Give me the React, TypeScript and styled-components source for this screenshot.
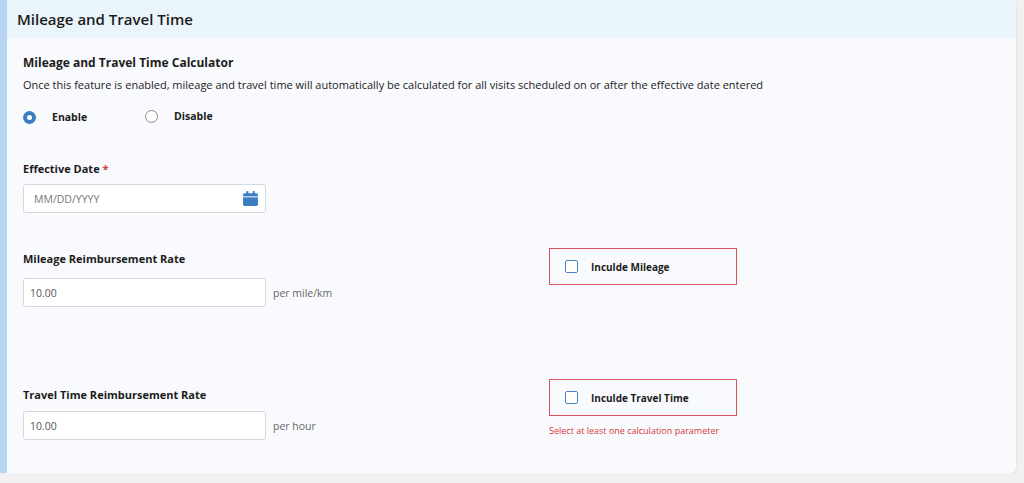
import React from 'react';
import styled, { createGlobalStyle } from 'styled-components';

const Global = createGlobalStyle`
  body { margin: 0; background: #f1f1f2; font-family: "Open Sans", "Noto Sans", sans-serif; }
`;

const Card = styled.div`
  width: 1016px;
  height: 473px;
  box-sizing: border-box;
  border-left: 7px solid #b5d5f2;
  border-radius: 0 0 6px 0;
  background: #f9fafd;
  box-shadow: 0 1px 3px rgba(0,0,0,0.12);
  overflow: hidden;
`;

const Header = styled.div`
  height: 38px;
  background: #eaf4fb;
  display: flex;
  align-items: center;
  padding-left: 10px;
  font-size: 15px;
  font-weight: 600;
  color: #1c1c1c;
`;

const Body = styled.div`
  padding: 16px 0 0 16px;
`;

const Title = styled.div`
  font-size: 12px;
  font-weight: 700;
  color: #1c1c1c;
  line-height: 18px;
`;

const Desc = styled.div`
  font-size: 11px;
  color: #222;
  line-height: 18px;
  margin-top: 4px;
`;

const RadioRow = styled.div`
  display: flex;
  margin-top: 16px;
`;

const RadioItem = styled.label<{ $w: number; $up?: boolean }>`
  display: flex;
  align-items: center;
  gap: 16px;
  width: ${p => p.$w}px;
  margin-top: ${p => (p.$up ? -2 : 0)}px;
  font-size: 10.5px;
  font-weight: 700;
  color: #1c1c1c;
`;

const RadioDot = styled.span<{ $on?: boolean }>`
  width: 13px;
  height: 13px;
  box-sizing: border-box;
  border-radius: 50%;
  border: ${p => (p.$on ? '4px solid #3a7ec1' : '1px solid #8b8b8b')};
  background: #fff;
`;

const Label = styled.div<{ $mb: number }>`
  font-size: 11px;
  font-weight: 700;
  color: #1c1c1c;
  line-height: 16px;
  margin-bottom: ${p => p.$mb}px;
`;

const Req = styled.span`
  color: #d43b3b;
`;

const Input = styled.div<{ $dim?: boolean }>`
  width: 243px;
  height: 29px;
  box-sizing: border-box;
  border: 1px solid #d5d9de;
  border-radius: 3px;
  background: #fff;
  display: flex;
  align-items: center;
  justify-content: space-between;
  padding: 0 6px 0 ${p => (p.$dim ? 10 : 6)}px;
  font-size: 10.5px;
  color: ${p => (p.$dim ? '#777' : '#555')};
`;

const Row = styled.div<{ $mt: number }>`
  display: flex;
  margin-top: ${p => p.$mt}px;
`;

const LeftCol = styled.div`
  width: 526px;
`;

const RightCol = styled.div<{ $mt: number }>`
  margin-top: ${p => p.$mt}px;
`;

const InputLine = styled.div`
  display: flex;
  align-items: center;
  gap: 7px;
`;

const Unit = styled.span`
  font-size: 10.5px;
  color: #666;
`;

const CheckBox = styled.div`
  width: 188px;
  height: 37px;
  box-sizing: border-box;
  border: 1px solid #d9535b;
  display: flex;
  align-items: center;
  gap: 13px;
  padding-left: 15px;
  font-size: 10px;
  font-weight: 700;
  color: #1c1c1c;
`;

const Square = styled.span`
  width: 13px;
  height: 13px;
  box-sizing: border-box;
  border: 1px solid #4a83bf;
  border-radius: 2px;
  background: #fff;
`;

const ErrorText = styled.div`
  font-size: 9px;
  color: #d43b3b;
  margin-top: 8px;
`;

const Calendar = () => (
  <svg width="17" height="17" viewBox="0 0 16 16">
    <rect x="1" y="3" width="14" height="12" rx="1.5" fill="#3a7ec1" />
    <rect x="4" y="1" width="2" height="3" rx="0.8" fill="#3a7ec1" />
    <rect x="10" y="1" width="2" height="3" rx="0.8" fill="#3a7ec1" />
    <rect x="1" y="6" width="14" height="0.9" fill="#fff" />
  </svg>
);

export default function App() {
  return (
    <>
      <Global />
      <Card>
        <Header>Mileage and Travel Time</Header>
        <Body>
          <Title>Mileage and Travel Time Calculator</Title>
          <Desc>
            Once this feature is enabled, mileage and travel time will automatically be calculated for all visits scheduled on or after the effective date entered
          </Desc>
          <RadioRow>
            <RadioItem $w={122}><RadioDot $on />Enable</RadioItem>
            <RadioItem $w={120} $up><RadioDot />Disable</RadioItem>
          </RadioRow>
          <Row $mt={37}>
            <LeftCol>
              <Label $mb={7}>Effective Date <Req>*</Req></Label>
              <Input $dim>MM/DD/YYYY<Calendar /></Input>
            </LeftCol>
          </Row>
          <Row $mt={38}>
            <LeftCol>
              <Label $mb={11}>Mileage Reimbursement Rate</Label>
              <InputLine><Input>10.00</Input><Unit>per mile/km</Unit></InputLine>
            </LeftCol>
            <RightCol $mt={-3}><CheckBox><Square />Inculde Mileage</CheckBox></RightCol>
          </Row>
          <Row $mt={80}>
            <LeftCol>
              <Label $mb={8}>Travel Time Reimbursement Rate</Label>
              <InputLine><Input>10.00</Input><Unit>per hour</Unit></InputLine>
            </LeftCol>
            <RightCol $mt={-8}>
              <CheckBox><Square />Inculde Travel Time</CheckBox>
              <ErrorText>Select at least one calculation parameter</ErrorText>
            </RightCol>
          </Row>
        </Body>
      </Card>
    </>
  );
}
